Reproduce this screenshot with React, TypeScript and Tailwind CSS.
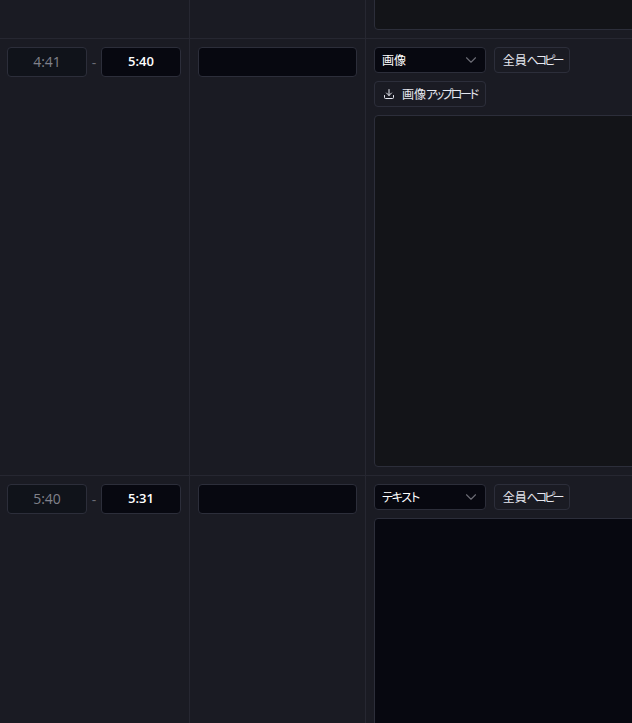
import { ChevronDown, Download } from "lucide-react";

const font = { fontFamily: '"Open Sans", "Noto Sans CJK JP", sans-serif' };

function TimeCell({ from, to }: { from: string; to: string }) {
  return (
    <div className="flex w-[190px] shrink-0 items-start border-r border-[#262731] pt-2 pl-[7px]">
      <div className="flex h-[30px] w-[80px] items-center justify-center rounded border border-[#2c2e3a] bg-[#10131a] text-sm text-[#80818a]">
        {from}
      </div>
      <span className="w-[14px] pt-1.5 text-center text-sm text-[#6a6b75]">-</span>
      <div className="flex h-[30px] w-[80px] items-center justify-center rounded border border-[#2c2e3a] bg-[#070810] text-[13px] font-semibold text-white">
        {to}
      </div>
    </div>
  );
}

function NameCell() {
  return (
    <div className="w-[176px] shrink-0 border-r border-[#262731] pt-2 pl-2">
      <div className="h-[30px] w-[159px] rounded border border-[#2c2e3a] bg-[#070810]" />
    </div>
  );
}

function Controls({ type, spacing }: { type: string; spacing: string }) {
  return (
    <div className="flex items-center gap-2">
      <div className="flex h-[26px] w-[112px] items-center justify-between rounded border border-[#2c2e3a] bg-[#070810] pr-[5px] pl-[7px] text-xs text-white [font-feature-settings:'palt']">
        <span className={spacing}>{type}</span>
        <ChevronDown className="h-[18px] w-[18px] text-[#6b6c75]" strokeWidth={1.5} />
      </div>
      <div className="flex h-[26px] w-[76px] items-center justify-center rounded border border-[#2c2e3a] pt-0.5 text-xs text-[#e6e8f0] [font-feature-settings:'palt']">
        全員<span className="tracking-[-3px]">へコピー</span>
      </div>
    </div>
  );
}

export default function App() {
  return (
    <div className="h-[723px] w-[632px] overflow-hidden bg-[#1a1b23]" style={font}>
      {/* 前の行 */}
      <div className="flex h-[39px] border-b border-[#262731]">
        <div className="w-[190px] shrink-0 border-r border-[#262731]" />
        <div className="w-[176px] shrink-0 border-r border-[#262731]" />
        <div className="flex flex-col justify-end pb-2 pl-2">
          <div className="h-[60px] w-[400px] shrink-0 rounded border border-[#2c2e3a] bg-[#131418]" />
        </div>
      </div>

      {/* 画像の行 */}
      <div className="flex h-[437px] border-b border-[#262731]">
        <TimeCell from="4:41" to="5:40" />
        <NameCell />
        <div className="flex flex-col gap-2 pt-2 pl-2">
          <Controls type="画像" spacing="pt-0.5" />
          <div className="flex h-[26px] w-[112px] items-center gap-[7px] rounded border border-[#2c2e3a] pl-[8px] text-xs whitespace-nowrap text-[#e6e8f0] [font-feature-settings:'palt']">
            <Download className="h-3 w-3 shrink-0" />
            <span className="pt-0.5">
              画像<span className="tracking-[-2.3px]">アップロード</span>
            </span>
          </div>
          <div className="h-[352px] w-[400px] rounded border border-[#2c2e3a] bg-[#131418]" />
        </div>
      </div>

      {/* テキストの行 */}
      <div className="flex h-[247px] overflow-hidden">
        <TimeCell from="5:40" to="5:31" />
        <NameCell />
        <div className="flex flex-col gap-2 pt-2 pl-2">
          <Controls type="テキスト" spacing="pt-0.5 tracking-[-1.2px]" />
          <div className="h-[300px] w-[400px] shrink-0 rounded border border-[#2c2e3a] bg-[#070810]" />
        </div>
      </div>
    </div>
  );
}
